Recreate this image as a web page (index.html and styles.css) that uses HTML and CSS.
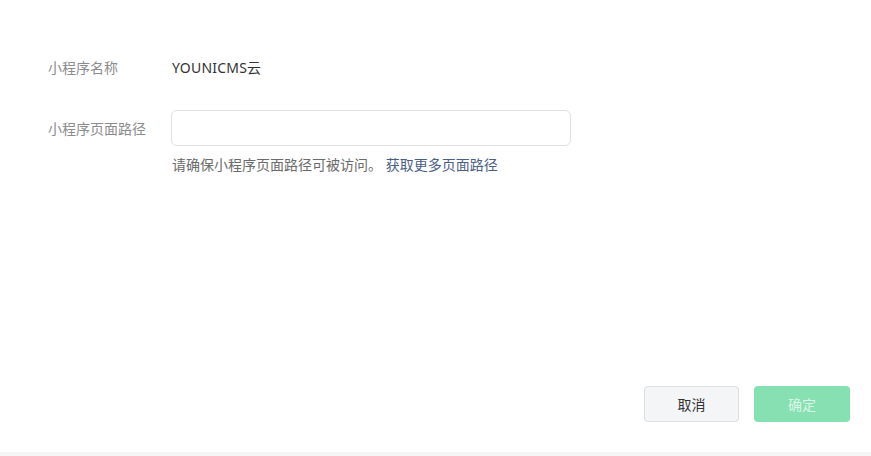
FILE: index.html
```html
<!DOCTYPE html>
<html lang="zh-CN">
  <head>
    <meta charset="utf-8">
    <title>小程序页面路径</title>
    <link rel="stylesheet" href="styles.css">
  </head>
  <body>
    <div class="page">
      <!-- form -->
      <div class="form">
        <div class="row">
          <div class="label">小程序名称</div>
          <div class="value">YOUNICMS云</div>
        </div>

        <div class="row row-input">
          <div class="label">小程序页面路径</div>
          <input class="input" type="text">
        </div>

        <div class="help">
          请确保小程序页面路径可被访问。 <a class="link" href="#">获取更多页面路径</a>
        </div>
      </div>

      <!-- buttons -->
      <div class="footer">
        <div class="btn btn-cancel">取消</div>
        <div class="btn btn-ok">确定</div>
      </div>
    </div>
    <div class="strip"></div>
  </body>
</html>
```

FILE: styles.css
```css
* {
  box-sizing: border-box;
  font-family: "Noto Sans", "Noto Sans CJK SC", sans-serif;
}

body {
  margin: 0;
  background-color: white;
}

.page {
  height: 452px;
  display: flex;
  flex-direction: column;
}

.form {
  padding: 49px 0 0 48px;
}

.row {
  display: flex;
  align-items: center;
  height: 36px;
}

.row-input {
  margin-top: 25px;
}

.label {
  width: 124px;
  font-size: 14px;
  color: #8c8c8c;
}

.value {
  font-size: 14px;
  color: #333;
  letter-spacing: 0.2px;
}

.input {
  width: 400px;
  height: 36px;
  margin-left: -1px;
  border: 1px solid #dfe1e6;
  border-radius: 6px;
  outline: none;
  font-size: 14px;
  padding: 0 12px;
}

.help {
  margin: 9px 0 0 124px;
  font-size: 14px;
  line-height: 20px;
  color: #6b6b6b;
}

.link {
  color: #4b5e85;
  text-decoration: none;
}

.footer {
  margin-top: auto;
  display: flex;
  justify-content: flex-end;
  gap: 15px;
  padding: 0 21px 30px 0;
}

.btn {
  width: 96px;
  height: 36px;
  display: flex;
  align-items: center;
  justify-content: center;
  font-size: 14px;
  border-radius: 4px;
}

.btn-cancel {
  width: 95px;
  background-color: #f4f5f7;
  border: 1px solid #dcdee2;
  color: #333;
}

.btn-ok {
  background-color: #87e0b1;
  color: #dbf6e8;
}

.strip {
  height: 4px;
  background-color: #f5f5f6;
}
```
